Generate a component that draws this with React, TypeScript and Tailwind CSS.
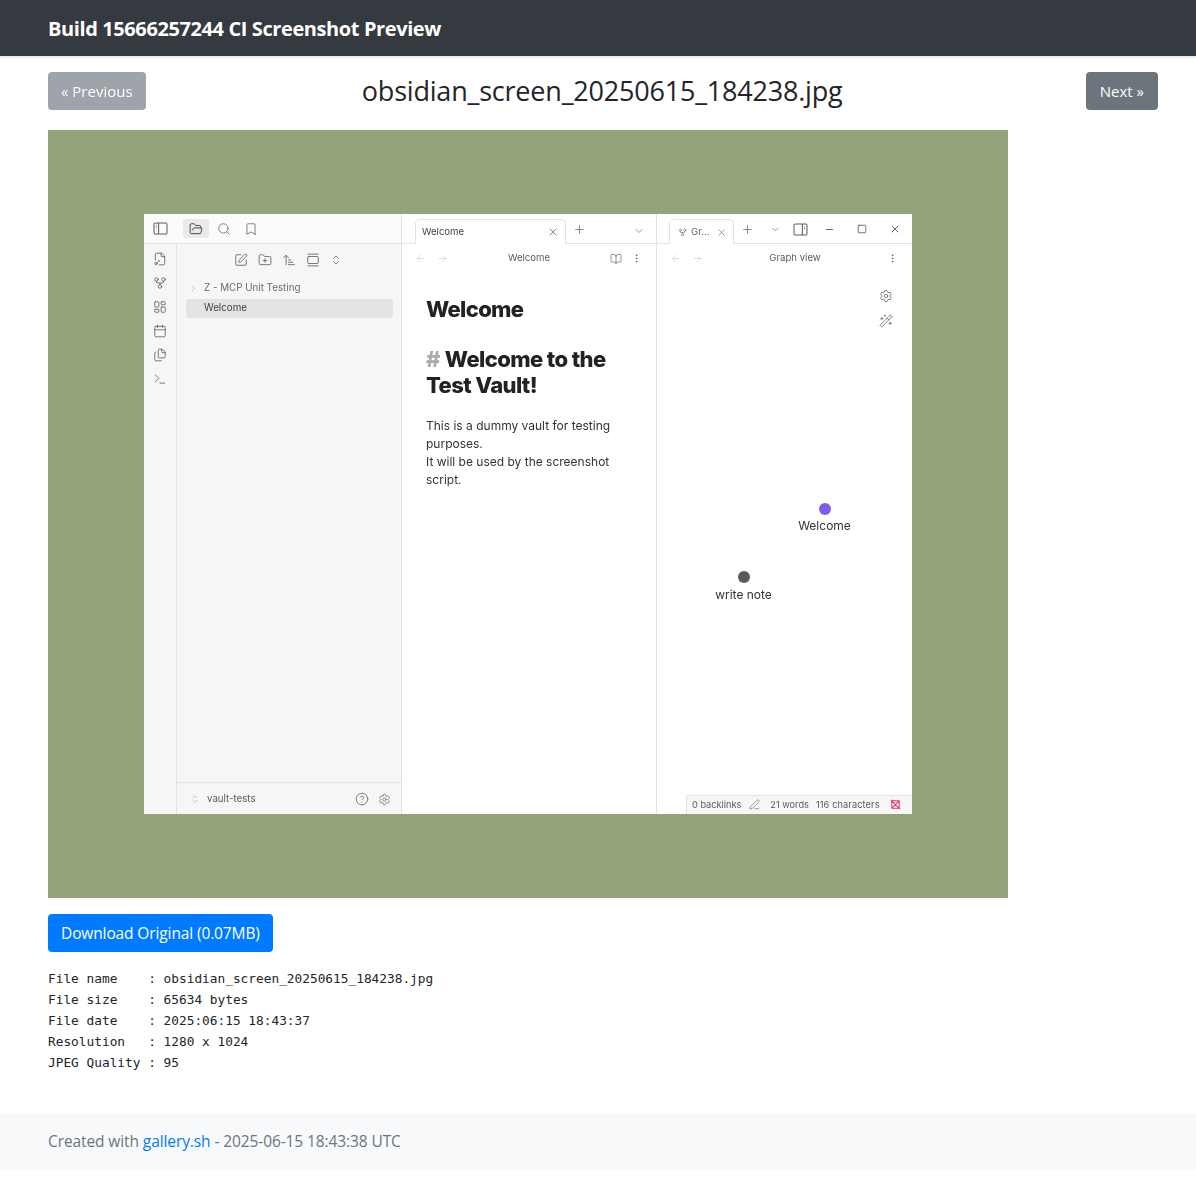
import {
  ArrowLeft,
  ArrowRight,
  ArrowUpNarrowWide,
  BookOpen,
  Bookmark,
  Calendar,
  ChevronDown,
  ChevronRight,
  ChevronsUpDown,
  CircleHelp,
  EllipsisVertical,
  FileKey2,
  Files,
  FolderOpen,
  FolderPlus,
  GalleryVertical,
  GitFork,
  LayoutDashboard,
  Minus,
  PenLine,
  Plus,
  Search,
  Settings,
  Square,
  SquarePen,
  Terminal,
  WandSparkles,
  X,
} from 'lucide-react'

const sans = "font-['Open_Sans','Noto_Sans',sans-serif]"

// obsidian's sidebar toggle, the narrow column carries two little dashes
const SidebarToggle = ({ right }: { right?: boolean }) => (
  <svg viewBox="0 0 16 14" className="w-[15px] h-[13px]" fill="none" stroke="currentColor" strokeWidth="1.1">
    <rect x="1" y="1" width="14" height="12" rx="1.5" />
    {right ? <path d="M10 1v12M12 4h1M12 6h1" /> : <path d="M6 1v12M3 4h1M3 6h1" />}
  </svg>
)

const Ribbon = () => {
  const icons = [FileKey2, GitFork, LayoutDashboard, Calendar, Files, Terminal]
  return (
    <div className="w-[33px] shrink-0 border-r border-[#e3e3e3] bg-[#f6f6f6] pt-[7px] flex flex-col items-center gap-[8px] text-[#5c5c5c]">
      {icons.map((Icon, index) => (
        <Icon key={index} size={14} strokeWidth={1.4} className="my-[1px] h-[14px]" />
      ))}
    </div>
  )
}

const FileSidebar = () => (
  <div className="w-[225px] shrink-0 border-r border-[#e3e3e3] bg-[#f6f6f6] flex flex-col">
    <div className="h-[30px] flex items-center justify-center gap-[10px] pr-[3px] pt-[1px] text-[#5c5c5c]">
      <SquarePen size={14} strokeWidth={1.4} />
      <FolderPlus size={14} strokeWidth={1.4} />
      <ArrowUpNarrowWide size={14} strokeWidth={1.4} />
      <GalleryVertical size={14} strokeWidth={1.4} />
      <ChevronsUpDown size={12} strokeWidth={1.4} />
    </div>
    <div className="mt-[4px] pl-[9px] pr-[8px] grow text-[9.8px]">
      <div className="h-[20px] flex items-center gap-[6px] pl-[3px] text-[#6b6b6b]">
        <ChevronRight size={9} strokeWidth={1.6} className="text-[#a8a8a8]" />
        <span>Z - MCP Unit Testing</span>
      </div>
      <div className="h-[19px] mt-[1px] flex items-center rounded-[3px] bg-[#e3e3e3] pl-[18px] text-[#3f3f3f]">
        Welcome
      </div>
    </div>
    <div className="h-[32px] pt-[1px] border-t border-[#e3e3e3] flex items-center pl-[13px] pr-[10px] text-[#5c5c5c]">
      <ChevronsUpDown size={10} strokeWidth={1.4} className="text-[#9a9a9a]" />
      <span className="ml-[7px] grow text-[9.7px]">vault-tests</span>
      <CircleHelp size={14} strokeWidth={1.3} className="mr-[9px]" />
      <Settings size={13} strokeWidth={1.3} />
    </div>
  </div>
)

const PaneHeader = ({ title, book }: { title: string; book?: boolean }) => (
  <div className="h-[29px] flex items-center pl-[13px] pr-[15px] text-[#5c5c5c]">
    <ArrowLeft size={11} strokeWidth={1.4} className="text-[#c8c8c8]" />
    <ArrowRight size={11} strokeWidth={1.4} className="ml-[11px] text-[#c8c8c8]" />
    <span className="grow text-center text-[9.6px] text-[#5c5c5c]">{title}</span>
    {book && <BookOpen size={12} strokeWidth={1.3} className="mr-[9px]" />}
    <EllipsisVertical size={11} strokeWidth={1.6} className="-mr-[1px]" />
  </div>
)

const NotePane = () => (
  <div className="w-[255px] shrink-0 border-r border-[#e3e3e3] bg-white flex flex-col">
    <PaneHeader title="Welcome" book />
    <div className="px-[24px] pt-[22px] text-[#222222]">
      <h1 className="font-extrabold text-[22px] leading-[28px] tracking-[-0.65px]">Welcome</h1>
      <h2 className="mt-[23px] font-extrabold text-[22px] leading-[26px] tracking-[-0.6px]">
        <span className="text-[#ababab] mr-[5px]">#</span>Welcome to the Test Vault!
      </h2>
      <p className="mt-[19px] text-[12px] leading-[18px] text-[#333333]">
        This is a dummy vault for testing purposes.
        <br />
        It will be used by the screenshot script.
      </p>
    </div>
  </div>
)

const GraphPane = () => (
  <div className="relative grow bg-white flex flex-col">
    <PaneHeader title="Graph view" />
    <div className="ml-auto mr-[19px] mt-[16px] flex flex-col gap-[11px] text-[#5c5c5c]">
      <Settings size={14} strokeWidth={1.3} />
      <WandSparkles size={14} strokeWidth={1.3} />
    </div>
    {/* graph nodes sit on a free canvas */}
    <div className="absolute left-[162px] top-[259px] w-[12px] h-[12px] rounded-full bg-[#7f5bea]" />
    <div className="absolute left-[112px] top-[273px] w-[111px] text-center text-[12px] leading-[18px] text-[#333333]">Welcome</div>
    <div className="absolute left-[81px] top-[327px] w-[12px] h-[12px] rounded-full bg-[#5a5a5a]" />
    <div className="absolute left-[31px] top-[342px] w-[111px] text-center text-[12px] leading-[18px] text-[#333333]">write note</div>
    <div className="absolute right-0 bottom-0 w-[226px] h-[19px] pb-[1px] bg-[#f6f6f6] border-t border-l border-[#e3e3e3] rounded-tl-[3px] flex items-center pl-[5px] text-[9.2px] text-[#5c5c5c]">
      <span>0 backlinks</span>
      <PenLine size={11} strokeWidth={1.3} className="ml-[8px]" />
      <span className="ml-[10px]">21 words</span>
      <span className="ml-[7px] tracking-[0.12px]">116 characters</span>
      <svg viewBox="0 0 12 12" className="ml-[10px] w-[11px] h-[11px] text-[#e0345b]" fill="none" stroke="currentColor" strokeWidth="1.1">
        <path d="M2 2h8v8H2zM1 1l10 10M10 2L2 10" />
      </svg>
    </div>
  </div>
)

const TitleBar = () => (
  <div className="h-[30px] flex border-b border-[#e3e3e3] bg-white text-[#5c5c5c]">
    <div className="w-[258px] shrink-0 border-r border-[#e3e3e3] bg-[#fbfbfb] flex items-center pl-[9px]">
      <SidebarToggle />
      <div className="ml-[15px] w-[26px] h-[19px] rounded-[3px] bg-[#e9e9e9] flex items-center justify-center text-[#333333]">
        <FolderOpen size={14} strokeWidth={1.5} />
      </div>
      <Search size={14} strokeWidth={1.3} className="ml-[8px]" />
      <Bookmark size={14} strokeWidth={1.3} className="ml-[13px]" />
    </div>
    <div className="w-[255px] shrink-0 border-r border-[#e3e3e3] flex items-end pl-[13px] pr-[11px]">
      <div className="w-[151px] h-[25px] -mb-[1px] bg-white border border-b-0 border-[#e3e3e3] rounded-t-[5px] flex items-center justify-between pl-[6px] pr-[6px] text-[9.6px] text-[#444444]">
        <span>Welcome</span>
        <X size={12} strokeWidth={1.3} />
      </div>
      <Plus size={13} strokeWidth={1.3} className="ml-[7px] mb-[7px]" />
      <ChevronDown size={12} strokeWidth={1.3} className="ml-auto mb-[6px]" />
    </div>
    <div className="grow flex items-end pl-[12px] text-[#333333]">
      <div className="w-[65px] h-[25px] -mb-[1px] bg-white border border-b-0 border-[#e3e3e3] rounded-t-[5px] flex items-center pl-[8px] pr-[6px] text-[9.6px] text-[#666666]">
        <GitFork size={9} strokeWidth={1.4} />
        <span className="ml-[4px] grow">Gr...</span>
        <X size={11} strokeWidth={1.4} />
      </div>
      <Plus size={13} strokeWidth={1.3} className="ml-[7px] mb-[7px] text-[#5c5c5c]" />
      <ChevronDown size={11} strokeWidth={1.3} className="ml-[16px] mb-[8px] text-[#5c5c5c]" />
      <div className="ml-[12px] mb-[7px] text-[#5c5c5c]">
        <SidebarToggle right />
      </div>
      <Minus size={11} strokeWidth={1.5} className="ml-[16px] mb-[8px]" />
      <Square size={10} strokeWidth={1.6} className="ml-[22px] mb-[9px]" />
      <X size={12} strokeWidth={1.5} className="ml-[22px] mb-[8px]" />
    </div>
  </div>
)

const ObsidianShot = () => (
  <div className="w-[768px] h-[600px] bg-white flex flex-col overflow-hidden blur-[0.3px] font-['Inter',sans-serif]">
    <TitleBar />
    <div className="grow flex min-h-0">
      <Ribbon />
      <FileSidebar />
      <NotePane />
      <GraphPane />
    </div>
  </div>
)

const meta = `File name    : obsidian_screen_20250615_184238.jpg
File size    : 65634 bytes
File date    : 2025:06:15 18:43:37
Resolution   : 1280 x 1024
JPEG Quality : 95`

const App = () => (
  <div className={`${sans} min-h-[1186px] bg-white text-[#212529] flex flex-col`}>
    <nav className="h-[56px] pt-[1px] bg-[#343a40] shadow-[0_1px_3px_rgba(0,0,0,0.15)] flex items-center pl-[48px]">
      <span className="text-white font-bold text-[20px] tracking-[-0.4px]">Build 15666257244 CI Screenshot Preview</span>
    </nav>
    <main className="pl-[48px] pr-[38px] pt-[16px]">
      <div className="flex items-center justify-between">
        <a className="h-[38px] px-[13px] flex items-center rounded-[4px] bg-[#6c757d] opacity-65 text-white text-[15px]">« Previous</a>
        <h1 className="text-[27px] leading-[38px] font-medium tracking-[-0.2px] text-[#212529] pr-[27px]">obsidian_screen_20250615_184238.jpg</h1>
        <a className="h-[38px] px-[14px] flex items-center rounded-[4px] bg-[#6c757d] text-white text-[15px]">Next »</a>
      </div>
      <div className="mt-[20px] w-[960px] h-[768px] bg-[#94a378] pt-[84px] pl-[96px]">
        <ObsidianShot />
      </div>
      <a className="mt-[16px] w-fit h-[38px] pt-[1px] px-[13px] flex items-center rounded-[4px] bg-[#007bff] text-white text-[15.5px] tracking-[-0.12px]">Download Original (0.07MB)</a>
      <pre className="mt-[16px] font-['DejaVu_Sans_Mono',monospace] text-[12.8px] leading-[21px] text-[#212529]">{meta}</pre>
    </main>
    <footer className="mt-[40px] h-[56px] pt-[1px] bg-[#f8f9fa] flex items-center pl-[48px] text-[15.5px] tracking-[-0.1px] text-[#6c757d]">
      <span>
        Created with <a className="text-[#007bff]">gallery.sh</a> - 2025-06-15 18:43:38 UTC
      </span>
    </footer>
  </div>
)

export default App
